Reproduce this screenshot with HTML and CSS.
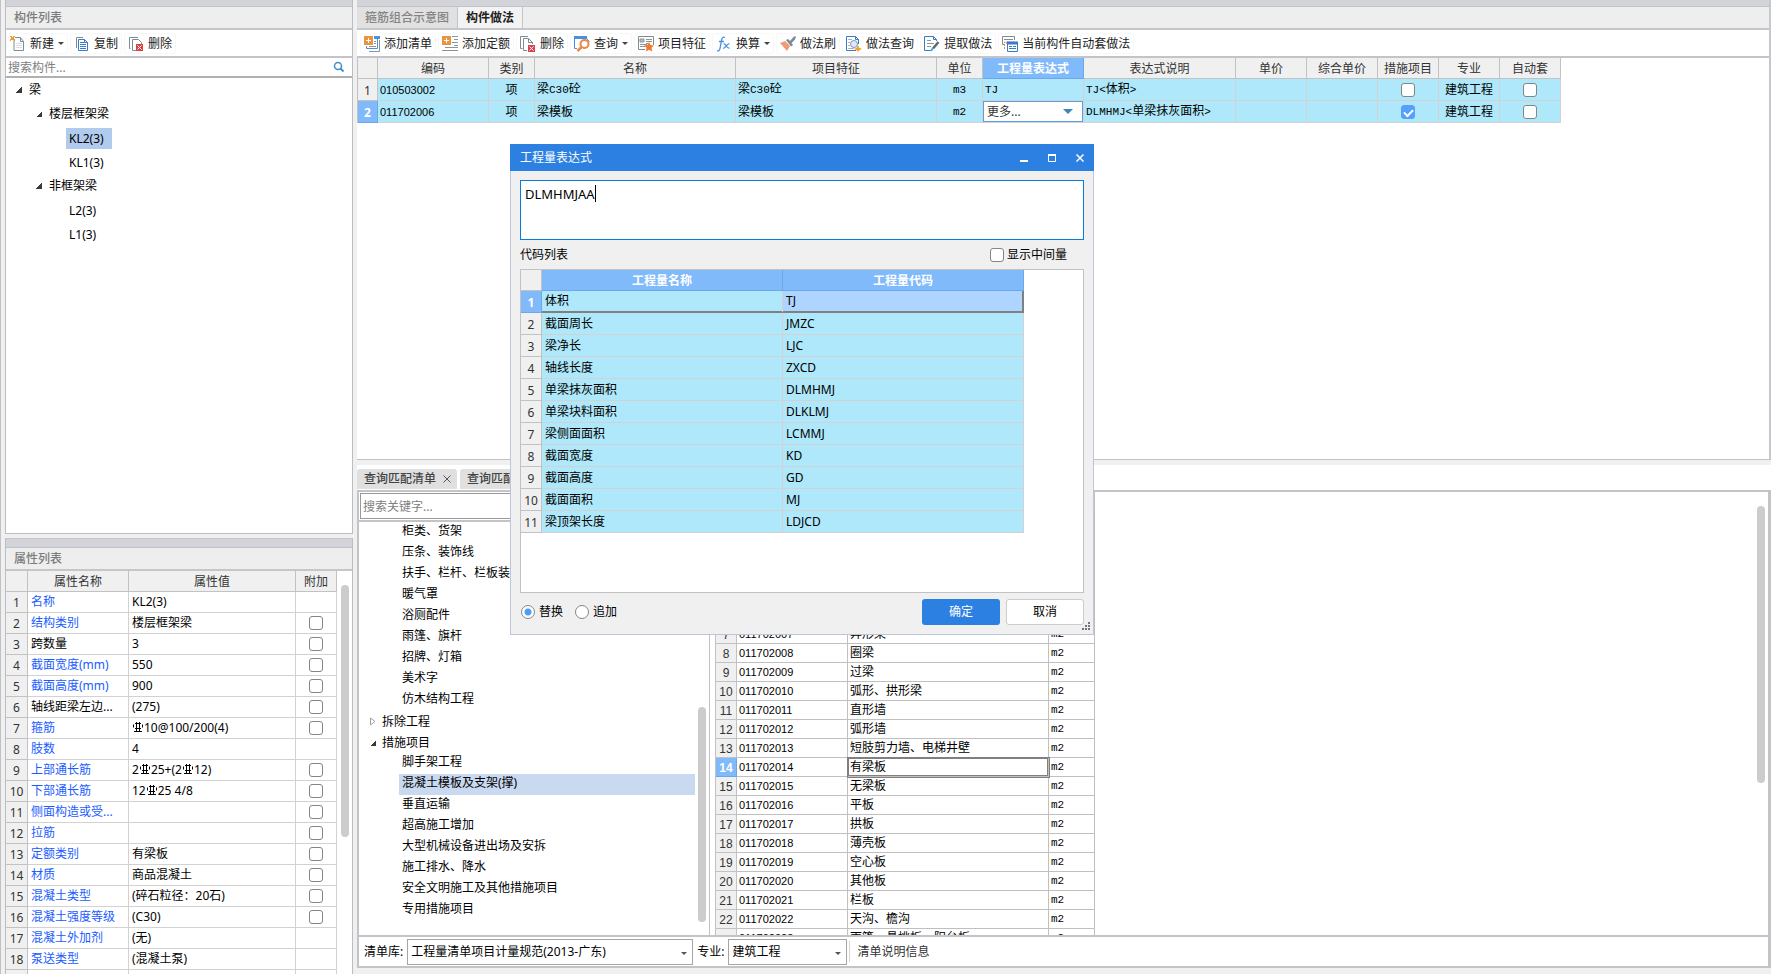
FILE: index.html
```html
<!DOCTYPE html>
<html lang="zh-CN">
<head>
<meta charset="utf-8">
<title>构件做法</title>
<link rel="stylesheet" href="styles.css">
</head>
<body>
<div class="app">
  <aside class="side">
    <section class="panel panel-tree">
      <div class="strip"></div>
      <h2 class="panel-title">构件列表</h2>
      <div class="toolbar">
        <button class="tool"><svg class="icon" viewBox="0 0 16 16"><path d="M4 3.5V14.500H13.500V5.500L10.500 1.500H5M10.500 1.500V5.500H13.500" fill="none" stroke="#7f8c94"/><path d="M6 7.500h6M6 9.500h6M6 11.500h6" stroke="#dcdde3"/><path d="M0 0h2v1H0zM3 0h2v1H3zM1 1h3v3H1zM0 3h1v2H0zM4 3h1v2H4z" fill="#f29a2e"/></svg>新建<i class="caret"></i></button>
        <button class="tool"><svg class="icon" viewBox="0 0 16 16"><path d="M2.500 12V1.500H9" fill="none" stroke="#7f8c94"/><path d="M4.500 3.500H10.500L13.500 6.500V14.500H4.500Z" fill="#fff" stroke="#3a7bc8"/><path d="M6 6.500h4M6 8.500h6M6 10.500h6M6 12.500h6M10.500 3.500v3h3" fill="none" stroke="#3a7bc8"/></svg>复制</button>
        <button class="tool"><svg class="icon" viewBox="0 0 16 16"><path d="M2.500 12.500H1.500V1.500H10" fill="none" stroke="#7f8c94"/><path d="M8 14.500H4.500V3.500H10.500L13.500 6.500V8" fill="none" stroke="#7f8c94"/><path d="M8 8h7v7H8z" fill="#d9413f"/><path d="M9.500 9.500l4 4M13.500 9.500l-4 4" stroke="#fff"/></svg>删除</button>
      </div>
      <div class="search"><input type="text" aria-label="搜索构件" placeholder="搜索构件..."><svg class="icon-s" viewBox="0 0 12 12"><circle cx="5" cy="5" r="3.500" fill="none" stroke="#3f8fc9" stroke-width="1.500"/><path d="M7.500 7.500L10.500 10.500" stroke="#3f8fc9" stroke-width="2"/></svg></div>
      <ul class="tree">
        <li><i class="open"></i>梁</li>
        <li class="lv2"><i class="open"></i>楼层框架梁</li>
        <li class="lv3"><span class="sel">KL2(3)</span></li>
        <li class="lv3"><span>KL1(3)</span></li>
        <li class="lv2"><i class="open"></i>非框架梁</li>
        <li class="lv3"><span>L2(3)</span></li>
        <li class="lv3"><span>L1(3)</span></li>
      </ul>
    </section>
    <section class="panel panel-props">
      <div class="strip"></div>
      <h2 class="panel-title">属性列表</h2>
      <div class="props-body">
        <table class="grid props">
          <colgroup><col class="w22"><col class="w101"><col class="w167"><col class="w41"></colgroup>
          <thead><tr><th></th><th>属性名称</th><th>属性值</th><th>附加</th></tr></thead>
          <tbody>
            <tr><th>1</th><td class="key">名称</td><td>KL2(3)</td><td></td></tr>
            <tr><th>2</th><td class="key">结构类别</td><td>楼层框架梁</td><td><input type="checkbox" aria-label="附加 结构类别"></td></tr>
            <tr><th>3</th><td>跨数量</td><td>3</td><td><input type="checkbox" aria-label="附加 跨数量"></td></tr>
            <tr><th>4</th><td class="key">截面宽度(mm)</td><td>550</td><td><input type="checkbox" aria-label="附加 截面宽度"></td></tr>
            <tr><th>5</th><td class="key">截面高度(mm)</td><td>900</td><td><input type="checkbox" aria-label="附加 截面高度"></td></tr>
            <tr><th>6</th><td>轴线距梁左边...</td><td>(275)</td><td><input type="checkbox" aria-label="附加 轴线距梁左边"></td></tr>
            <tr><th>7</th><td class="key">箍筋</td><td><svg class="rebar" viewBox="0 0 10 10"><path d="M3.500 0V9M6.500 0V9M1 9.500h8M2 1.500h6M2 6.500h6M.5 2.500v3M9.500 2.500v3" fill="none" stroke="#000"/></svg>10@100/200(4)</td><td><input type="checkbox" aria-label="附加 箍筋"></td></tr>
            <tr><th>8</th><td class="key">肢数</td><td>4</td><td></td></tr>
            <tr><th>9</th><td class="key">上部通长筋</td><td>2<svg class="rebar" viewBox="0 0 10 10"><path d="M3.500 0V9M6.500 0V9M1 9.500h8M2 1.500h6M2 6.500h6M.5 2.500v3M9.500 2.500v3" fill="none" stroke="#000"/></svg>25+(2<svg class="rebar" viewBox="0 0 10 10"><path d="M3.500 0V9M6.500 0V9M1 9.500h8M2 1.500h6M2 6.500h6M.5 2.500v3M9.500 2.500v3" fill="none" stroke="#000"/></svg>12)</td><td><input type="checkbox" aria-label="附加 上部通长筋"></td></tr>
            <tr><th>10</th><td class="key">下部通长筋</td><td>12<svg class="rebar" viewBox="0 0 10 10"><path d="M3.500 0V9M6.500 0V9M1 9.500h8M2 1.500h6M2 6.500h6M.5 2.500v3M9.500 2.500v3" fill="none" stroke="#000"/></svg>25 4/8</td><td><input type="checkbox" aria-label="附加 下部通长筋"></td></tr>
            <tr><th>11</th><td class="key">侧面构造或受...</td><td></td><td><input type="checkbox" aria-label="附加 侧面构造"></td></tr>
            <tr><th>12</th><td class="key">拉筋</td><td></td><td><input type="checkbox" aria-label="附加 拉筋"></td></tr>
            <tr><th>13</th><td class="key">定额类别</td><td>有梁板</td><td><input type="checkbox" aria-label="附加 定额类别"></td></tr>
            <tr><th>14</th><td class="key">材质</td><td>商品混凝土</td><td><input type="checkbox" aria-label="附加 材质"></td></tr>
            <tr><th>15</th><td class="key">混凝土类型</td><td>(碎石粒径：20石)</td><td><input type="checkbox" aria-label="附加 混凝土类型"></td></tr>
            <tr><th>16</th><td class="key">混凝土强度等级</td><td>(C30)</td><td><input type="checkbox" aria-label="附加 混凝土强度等级"></td></tr>
            <tr><th>17</th><td class="key">混凝土外加剂</td><td>(无)</td><td></td></tr>
            <tr><th>18</th><td class="key">泵送类型</td><td>(混凝土泵)</td><td></td></tr>
            <tr><th></th><td></td><td></td><td></td></tr>
          </tbody>
        </table>
        <div class="thumb thumb-props"></div>
      </div>
    </section>
  </aside>

  <main class="main">
    <section class="work">
      <div class="strip"></div>
      <nav class="tabs">
        <button class="tab">箍筋组合示意图</button>
        <button class="tab active">构件做法</button>
      </nav>
      <div class="toolbar">
        <button class="tool"><svg class="icon" viewBox="0 0 16 16"><path d="M0 0h9v9H0z" fill="#ea9440"/><path d="M4.500 2v5M2 4.500h5" stroke="#fff"/><path d="M10 0h6v3h-6z" fill="#4a90e2"/><path d="M13.500 3v9.500H2.500V10" fill="none" stroke="#4a90e2"/><path d="M15.500 4v11.500H5" fill="none" stroke="#8a949b"/><path d="M10 5.500h2M10 7.500h2M5 10.500h7" stroke="#8a949b"/></svg>添加清单</button>
        <button class="tool"><svg class="icon" viewBox="0 0 16 16"><path d="M0 0h9v9H0z" fill="#ea9440"/><path d="M4.500 2v5M2 4.500h5" stroke="#fff"/><path d="M10 .5h6M12 3.500h4M10 6.500h6M12 9.500h4M3 11.500h13M0 14.500h16" stroke="#8a949b"/></svg>添加定额</button>
        <button class="tool"><svg class="icon" viewBox="0 0 16 16"><path d="M2.500 12.500H.5V.5H8" fill="none" stroke="#7f8c94"/><path d="M7 14.500H3.500V2.500H8.500L12.500 6.500V8M8.500 2.500v4h4" fill="none" stroke="#7f8c94"/><path d="M8 9h7v7H8z" fill="#d9414f"/><path d="M9.500 10.500l4 4M13.500 10.500l-4 4" stroke="#fff"/></svg>删除</button>
        <button class="tool"><svg class="icon" viewBox="0 0 16 16"><path d="M0 0h13v3H0z" fill="#4a90e2"/><path d="M.5 2V12.500H3M13 3l2.500 2.500" fill="none" stroke="#4a90e2"/><circle cx="10.500" cy="8" r="4" fill="#fff" stroke="#ef8741" stroke-width="2"/><path d="M7.500 11L3.500 15" stroke="#ef8741" stroke-width="2.500"/></svg>查询<i class="caret"></i></button>
        <button class="tool"><svg class="icon" viewBox="0 0 16 16"><path d="M7 13.500H.5V.5H15.500V9" fill="none" stroke="#7f8c94"/><path d="M2 3h4v3H2zM8 3.500h6M8 5.500h6M2 8.500h7M2 10.500h5M8 7.500h2" stroke="#8a949b" fill="#b9c0c5"/><path d="M11 6l1.600 3 3.400.4-2.500 2.300.7 3.700L11 13.700 7.800 15.400l.7-3.700L6 9.400l3.400-.4z" fill="#ef7a2c"/></svg>项目特征</button>
        <button class="tool"><svg class="icon" viewBox="0 0 16 16"><path d="M9 1.500C7 .5 6 2 5.600 4L4 12.500C3.600 14.500 2.500 15.500 1 14.500M3 5.500h5" fill="none" stroke="#4a90e2" stroke-width="1.300"/><path d="M7.500 8.200C10 6.500 10 13 13.500 12M13.500 7.500C11 8 9.500 12 7 12.500" fill="none" stroke="#4a90e2" stroke-width="1.200"/></svg>换算<i class="caret"></i></button>
        <button class="tool"><svg class="icon" viewBox="0 0 16 16"><path d="M0 7l5-2 5 5-3 5z" fill="#f29a78"/><path d="M6 4l2-1 2 2 3-3.500 2-1.500 1 1-1 2.500L11.500 7 13 9l-2 1.500z" fill="#7b8a94"/></svg>做法刷</button>
        <button class="tool"><svg class="icon" viewBox="0 0 16 16"><path d="M10 14.500H.5V.5H9.500L12.500 3.500V8M9.500 .5v3h3" fill="none" stroke="#3a7bc8"/><path d="M2 3.500h4M2 6.500h2M2 9.500h2M2 12.500h6" stroke="#aab3ba"/><circle cx="8" cy="8" r="3.500" fill="#dfe9f7" stroke="#7a95c4"/><path d="M12 9l1.300 2.700L16 13l-2.700 1.300L12 16l-1.300-1.700L8 13l2.700-1.300z" fill="#f2a02e"/></svg>做法查询</button>
        <button class="tool"><svg class="icon" viewBox="0 0 16 16"><path d="M7 14.500H.5V.5H9.500L12.500 3.500V5M9.500 .5v3h3" fill="none" stroke="#3a7bc8"/><path d="M3 4.500h4M3 7.500h7M3 10.500h4" stroke="#8a949b"/><path d="M14.500 6L9 12.500" stroke="#5f6b73" stroke-width="2.500"/><path d="M9 12l-2 3" stroke="#3cb4d8" stroke-width="2"/></svg>提取做法</button>
        <button class="tool"><svg class="icon" viewBox="0 0 16 16"><path d="M3 8.500H.5V.5H12.500V4M2 3.500h9" fill="none" stroke="#7f8c94"/><path d="M2.500 13V6H12" fill="none" stroke="#ef8741" stroke-dasharray="2 1"/><path d="M5.500 6.500h10v9h-10z" fill="#fff" stroke="#3a7bc8"/><path d="M5 6h11v2H5zM7 10.500h3M11 10.500h3M7 12.500h7" fill="#3a7bc8" stroke="#3a7bc8"/></svg>当前构件自动套做法</button>
      </div>
      <table class="grid bill">
        <colgroup><col class="w20"><col class="w111"><col class="w46"><col class="w201"><col class="w201"><col class="w46"><col class="w101"><col class="w152"><col class="w71"><col class="w71"><col class="w61"><col class="w61"><col class="w61"></colgroup>
        <thead><tr><th></th><th>编码</th><th>类别</th><th>名称</th><th>项目特征</th><th>单位</th><th class="hot">工程量表达式</th><th>表达式说明</th><th>单价</th><th>综合单价</th><th>措施项目</th><th>专业</th><th>自动套</th></tr></thead>
        <tbody>
          <tr><th>1</th><td class="code">010503002</td><td class="mid">项</td><td>梁<span class="mono">C30</span>砼</td><td>梁<span class="mono">C30</span>砼</td><td class="mid mono">m3</td><td class="mono">TJ</td><td><span class="mono">TJ&lt;</span>体积<span class="mono">&gt;</span></td><td></td><td></td><td class="mid"><input type="checkbox" aria-label="措施项目 1"></td><td class="mid">建筑工程</td><td class="mid"><input type="checkbox" aria-label="自动套 1"></td></tr>
          <tr><th class="hot">2</th><td class="code">011702006</td><td class="mid">项</td><td>梁模板</td><td>梁模板</td><td class="mid mono">m2</td><td class="edit"><span class="select"><select aria-label="工程量表达式"><option>更多...</option></select></span></td><td><span class="mono">DLMHMJ&lt;</span>单梁抹灰面积<span class="mono">&gt;</span></td><td></td><td></td><td class="mid"><input type="checkbox" checked aria-label="措施项目 2"></td><td class="mid">建筑工程</td><td class="mid"><input type="checkbox" aria-label="自动套 2"></td></tr>
        </tbody>
      </table>
    </section>

    <section class="query">
      <nav class="qtabs">
        <button class="qtab">查询匹配清单<svg class="x" viewBox="0 0 8 8"><path d="M.5 .5l7 7M7.500 .5l-7 7" stroke="#555"/></svg></button>
        <button class="qtab">查询匹配定额<svg class="x" viewBox="0 0 8 8"><path d="M.5 .5l7 7M7.500 .5l-7 7" stroke="#555"/></svg></button>
      </nav>
      <div class="query-body">
        <div class="lib">
          <div class="lib-search"><input type="text" aria-label="搜索关键字" placeholder="搜索关键字..."></div>
          <div class="lib-scroll">
            <ul class="lib-tree">
              <li>柜类、货架</li>
              <li>压条、装饰线</li>
              <li>扶手、栏杆、栏板装饰</li>
              <li>暖气罩</li>
              <li>浴厕配件</li>
              <li>雨篷、旗杆</li>
              <li>招牌、灯箱</li>
              <li>美术字</li>
              <li>仿木结构工程</li>
              <li class="top"><svg class="closed" viewBox="0 0 6 9"><path d="M.5 1L5 4.500L.5 8Z" fill="none" stroke="#a0a0a0"/></svg>拆除工程</li>
              <li class="top"><i class="open"></i>措施项目</li>
              <li>脚手架工程</li>
              <li class="sel">混凝土模板及支架(撑)</li>
              <li>垂直运输</li>
              <li>超高施工增加</li>
              <li>大型机械设备进出场及安拆</li>
              <li>施工排水、降水</li>
              <li>安全文明施工及其他措施项目</li>
              <li>专用措施项目</li>
            </ul>
            <div class="thumb thumb-lib"></div>
          </div>
        </div>
        <div class="items">
          <table class="grid match">
            <colgroup><col class="w21"><col class="w111"><col class="w201"><col class="w46"></colgroup>
            <thead><tr><th></th><th>编码</th><th>名称</th><th>单位</th></tr></thead>
            <tbody>
              <tr><th>1</th><td class="code">011702001</td><td>基础</td><td class="mono">m2</td></tr>
              <tr><th>2</th><td class="code">011702002</td><td>矩形柱</td><td class="mono">m2</td></tr>
              <tr><th>3</th><td class="code">011702003</td><td>构造柱</td><td class="mono">m2</td></tr>
              <tr><th>4</th><td class="code">011702004</td><td>异形柱</td><td class="mono">m2</td></tr>
              <tr><th>5</th><td class="code">011702005</td><td>基础梁</td><td class="mono">m2</td></tr>
              <tr><th>6</th><td class="code">011702006</td><td>矩形梁</td><td class="mono">m2</td></tr>
              <tr><th>7</th><td class="code">011702007</td><td>异形梁</td><td class="mono">m2</td></tr>
              <tr><th>8</th><td class="code">011702008</td><td>圈梁</td><td class="mono">m2</td></tr>
              <tr><th>9</th><td class="code">011702009</td><td>过梁</td><td class="mono">m2</td></tr>
              <tr><th>10</th><td class="code">011702010</td><td>弧形、拱形梁</td><td class="mono">m2</td></tr>
              <tr><th>11</th><td class="code">011702011</td><td>直形墙</td><td class="mono">m2</td></tr>
              <tr><th>12</th><td class="code">011702012</td><td>弧形墙</td><td class="mono">m2</td></tr>
              <tr><th>13</th><td class="code">011702013</td><td>短肢剪力墙、电梯井壁</td><td class="mono">m2</td></tr>
              <tr><th class="hot">14</th><td class="code">011702014</td><td class="focus">有梁板</td><td class="mono">m2</td></tr>
              <tr><th>15</th><td class="code">011702015</td><td>无梁板</td><td class="mono">m2</td></tr>
              <tr><th>16</th><td class="code">011702016</td><td>平板</td><td class="mono">m2</td></tr>
              <tr><th>17</th><td class="code">011702017</td><td>拱板</td><td class="mono">m2</td></tr>
              <tr><th>18</th><td class="code">011702018</td><td>薄壳板</td><td class="mono">m2</td></tr>
              <tr><th>19</th><td class="code">011702019</td><td>空心板</td><td class="mono">m2</td></tr>
              <tr><th>20</th><td class="code">011702020</td><td>其他板</td><td class="mono">m2</td></tr>
              <tr><th>21</th><td class="code">011702021</td><td>栏板</td><td class="mono">m2</td></tr>
              <tr><th>22</th><td class="code">011702022</td><td>天沟、檐沟</td><td class="mono">m2</td></tr>
              <tr><th></th><td class="code">011702023</td><td>雨篷、悬挑板、阳台板</td><td class="mono">m2</td></tr>
            </tbody>
          </table>
          <div class="thumb thumb-items"></div>
        </div>
      </div>
      <footer class="foot">
        <label for="lib">清单库:</label>
        <span class="select lib-select"><select id="lib"><option>工程量清单项目计量规范(2013-广东)</option></select></span>
        <label for="major">专业:</label>
        <span class="select major-select"><select id="major"><option>建筑工程</option></select></span>
        <button class="info">清单说明信息</button>
      </footer>
    </section>
  </main>

  <div class="dialog" role="dialog" aria-labelledby="dlg-title">
    <header class="dlg-head">
      <h1 id="dlg-title">工程量表达式</h1>
      <button aria-label="最小化"><svg viewBox="0 0 8 8"><path d="M0 7h8" stroke="#fff" stroke-width="2"/></svg></button>
      <button aria-label="最大化"><svg viewBox="0 0 8 8"><path d="M.5 1v6.500h7V1M0 1h8" fill="none" stroke="#fff"/><path d="M0 1h8" stroke="#fff" stroke-width="2"/></svg></button>
      <button aria-label="关闭"><svg viewBox="0 0 8 8"><path d="M.5 .5l7 7M7.500 .5l-7 7" stroke="#fff" stroke-width="1.500"/></svg></button>
    </header>
    <div class="dlg-body">
      <div class="expr"><textarea aria-label="表达式" spellcheck="false">DLMHMJAA</textarea><i class="cursor"></i></div>
      <div class="dlg-row"><span>代码列表</span><label><input type="checkbox">显示中间量</label></div>
      <div class="codes">
        <table class="grid vars">
          <colgroup><col class="w21"><col class="w241"><col class="w241"></colgroup>
          <thead><tr><th></th><th class="hot">工程量名称</th><th class="hot">工程量代码</th></tr></thead>
          <tbody>
            <tr class="current"><th class="hot">1</th><td>体积</td><td>TJ</td></tr>
            <tr><th>2</th><td>截面周长</td><td>JMZC</td></tr>
            <tr><th>3</th><td>梁净长</td><td>LJC</td></tr>
            <tr><th>4</th><td>轴线长度</td><td>ZXCD</td></tr>
            <tr><th>5</th><td>单梁抹灰面积</td><td>DLMHMJ</td></tr>
            <tr><th>6</th><td>单梁块料面积</td><td>DLKLMJ</td></tr>
            <tr><th>7</th><td>梁侧面面积</td><td>LCMMJ</td></tr>
            <tr><th>8</th><td>截面宽度</td><td>KD</td></tr>
            <tr><th>9</th><td>截面高度</td><td>GD</td></tr>
            <tr><th>10</th><td>截面面积</td><td>MJ</td></tr>
            <tr><th>11</th><td>梁顶架长度</td><td>LDJCD</td></tr>
          </tbody>
        </table>
      </div>
      <div class="dlg-foot">
        <label><input type="radio" name="mode" checked>替换</label>
        <label><input type="radio" name="mode">追加</label>
        <button class="ok">确定</button>
        <button class="cancel">取消</button>
      </div>
    </div>
    <svg class="grip" viewBox="0 0 9 9"><path d="M6 0h2v2H6zM3 3h2v2H3zM6 3h2v2H6zM0 6h2v2H0zM3 6h2v2H3zM6 6h2v2H6z" fill="#72757a"/></svg>
  </div>
</div>
</body>
</html>
```
FILE: styles.css
```css
* { box-sizing: border-box; }
body, h1, h2, ul { margin: 0; padding: 0; }
body, button, input, select, textarea {
  font-family: "Noto Sans", "Noto Sans CJK SC", sans-serif;
  font-size: 12px;
  line-height: 18px;
  color: #000;
}
button { border: 0; background: none; padding: 0; }
ul { list-style: none; }
svg { display: block; flex: none; }

.app {
  position: relative;
  display: flex;
  gap: 4px;
  height: 100vh;
  overflow: hidden;
  background: #f0f0f0;
  border-left: 1px solid #c2c2c2;
}

/* Left column */
.side { flex: none; width: 352px; padding-left: 4px; display: flex; flex-direction: column; gap: 4px; }
.panel { display: flex; flex-direction: column; min-height: 0; border: 1px solid #bbbdc0; border-top: 0; background: #fff; }
.panel-tree { flex: 534 1 0; }
.panel-props { flex: 436 1 0; border-bottom: 0; border-top: 1px solid #c4c6cc; }
.strip { flex: none; height: 7px; background: #d3d4da; border-bottom: 1px solid #c0c3c9; }
.panel-props .strip { height: 9px; }
.panel-title {
  flex: none; height: 23px; padding: 1px 0 0 8px;
  background: #eee; border-bottom: 2px solid #c4c6ca;
  font-size: 12px; line-height: 20px; font-weight: 500; color: #7c7c7c;
}
.toolbar { flex: none; display: flex; align-items: center; gap: 2px; height: 28px; padding-top: 1px; background: #fff; border-bottom: 2px solid #c4c4c8; }
.tool { display: flex; align-items: center; gap: 4px; height: 21px; padding: 0 3px; border: 1px solid #f8f8f8; border-radius: 3px; color: #222; white-space: nowrap; }
.icon { width: 16px; height: 16px; }
.caret { width: 0; height: 0; border: 3px solid transparent; border-top-color: #444; border-bottom: 0; }
.search { flex: none; display: flex; align-items: center; height: 20px; padding-right: 7px; border-bottom: 2px solid #b0b0b0; }
.search input { flex: 1; min-width: 0; height: 18px; border: 0; padding: 1px 2px 0; background: none; outline: 0; }
.icon-s { width: 12px; height: 12px; }
::placeholder { color: #808080; opacity: 1; }

.tree li { display: flex; align-items: center; height: 24px; padding-left: 10px; }
.tree .lv2 { padding-left: 30px; }
.tree .lv3 { padding-left: 60px; }
.tree span { padding: 0 8px 0 3px; line-height: 21px; }
.tree .sel { background: #b0cbee; }
.open { flex: none; width: 6px; height: 6px; margin-right: 7px; background: linear-gradient(135deg, transparent 50%, #3a3a3a 50%); }

/* Shared tables */
.grid { border-spacing: 0; table-layout: fixed; width: 0; }
.grid th, .grid td {
  height: 22px; padding: 0 3px; overflow: hidden;
  border-right: 1px solid #d2d2d2; border-bottom: 1px solid #d2d2d2;
  line-height: 18px; text-align: left; white-space: nowrap;
}
.grid th { padding: 2px 0 0; background: #f0f0f0; border-color: #c2c2c2; color: #333; font-weight: 400; text-align: center; }
.grid th.hot { background: #80bafb; border-color: #6ba8ea; color: #fff; font-weight: 700; }
.grid .mid { text-align: center; padding: 0; }
.grid .mono { font-family: "Liberation Mono", monospace; font-size: 11px; }
.grid .code { font-family: "Liberation Sans", sans-serif; font-size: 11px; }
.w20 { width: 20px; } .w21 { width: 21px; } .w22 { width: 22px; } .w41 { width: 41px; } .w46 { width: 46px; }
.w61 { width: 61px; } .w71 { width: 71px; } .w101 { width: 101px; } .w111 { width: 111px; }
.w152 { width: 152px; } .w167 { width: 167px; } .w201 { width: 201px; } .w241 { width: 241px; }

input[type="checkbox"], input[type="radio"] {
  appearance: none; display: block; flex: none; width: 14px; height: 14px; margin: 0;
  border: 1px solid #858585; border-radius: 3px; background: #fff;
}
td input[type="checkbox"] { margin: 0 auto; }
input[type="checkbox"]:checked { border-color: #55a0fb; background: #55a0fb; }
input[type="checkbox"]:checked::after {
  content: ""; display: block; width: 7px; height: 4px; margin: 3px auto 0;
  border: solid #fff; border-width: 0 0 2px 2px; transform: rotate(-45deg);
}
input[type="radio"] { border-radius: 50%; }
input[type="radio"]:checked { background: radial-gradient(circle, #4d9cf5 3px, #fff 4px); }

/* Property table */
.props-body { display: flex; flex: 1; min-height: 0; overflow: hidden; }
.props th, .props td { height: 21px; }
.grid.props td { padding-top: 1px; }
.props .key { color: #1a5cff; }
.rebar { display: inline-block; width: 10px; height: 10px; margin: 0 1px; vertical-align: 0; }
.thumb { flex: none; width: 8px; border-radius: 4px; background: #ccc; }
.thumb-props { height: 252px; margin: 14px 0 0 4px; }

/* Work area */
.main { flex: 1; min-width: 0; display: flex; flex-direction: column; gap: 5px; }
.work { flex: 459 1 0; min-height: 0; overflow: hidden; background: #fff; border-bottom: 1px solid #c2c2c2; border-right: 2px solid #c4c8d0; }
.work .toolbar { padding-left: 3px; }
.tabs { display: flex; height: 23px; background: #eee; border-bottom: 2px solid #c4c6ca; }
.tab { padding: 1px 8px 0; border-right: 1px solid #c4c6ca; background: #e1e1e1; color: #858585; font-weight: 500; white-space: nowrap; }
.tab.active { background: #f3f3f3; color: #222; font-weight: 700; }
.bill thead th { height: 21px; }
.bill { border-left: 1px solid #c2c2c2; }
.bill td { padding: 0 2px; background: #aee8fa; }
.select { position: relative; display: block; background: #fff; }
.select select { appearance: none; display: block; width: 100%; height: 100%; padding: 1px 3px 0; border: 0; background: none; }
.select::after { content: ""; position: absolute; right: 5px; top: 50%; border: 3px solid transparent; border-top-color: #555; border-bottom: 0; pointer-events: none; }
.grid .edit { padding: 0; }
.edit .select { height: 21px; border: 1px solid #5a9fe8; }
.edit .select::after { right: 9px; top: 7px; border-width: 5px; border-top-color: #3c88b8; border-bottom: 0; }
.edit select { color: #333; }

/* Query area */
.query { flex: 503 1 0; min-height: 0; display: flex; flex-direction: column; background: #fff; border-bottom: 6px solid #f0f0f0; }
.qtabs { flex: none; display: flex; gap: 3px; height: 27px; padding-top: 4px; border-bottom: 2px solid #c2c4c8; }
.qtab { display: flex; align-items: center; gap: 7px; height: 20px; padding: 0 6px 0 7px; border-radius: 3px 3px 0 0; background: #e0e0e0; color: #444; font-weight: 500; white-space: nowrap; }
.x { width: 8px; height: 8px; }
.query-body { display: flex; flex: 1; min-height: 0; border: solid #c2c4c8; border-width: 0 3px 2px 2px; }
.lib { flex: none; width: 351px; display: flex; flex-direction: column; border-right: 1px solid #c2c2c2; }
.lib-search { flex: none; height: 30px; padding: 1px; border-bottom: 2px solid #c2c4c8; }
.lib-search input { display: block; width: 100%; height: 26px; padding: 0 2px; border: 1px solid #999; outline: 0; }
.lib-scroll { display: flex; flex: 1; min-height: 0; overflow: hidden; }
.lib-tree { flex: 1; }
.lib-tree li { height: 21px; margin: 0 3px 0 40px; padding-left: 3px; line-height: 18px; white-space: nowrap; }
.lib-tree .top { display: flex; align-items: center; margin-left: 11px; padding: 0; line-height: 16px; }
.lib-tree .sel { background: #c9d9f0; }
.closed { width: 6px; height: 9px; margin-right: 6px; }
.lib-tree .open { margin-right: 6px; }
.thumb-lib { height: 215px; margin: 185px 3px 0 0; }
.items { flex: 1; min-width: 0; display: flex; justify-content: space-between; overflow: hidden; margin-left: 5px; background: #fff; border-left: 1px solid #c2c2c2; }
.match th, .match td { height: 19px; line-height: 16px; }
.grid.match td { padding: 0 2px; border-color: #c0c0c0; }
.match .focus { box-shadow: inset 0 0 0 1px #808080; outline: 1px solid #808080; }
.match tbody th { font-family: "Liberation Sans", sans-serif; }
.thumb-items { height: 277px; margin: 14px 3px 0 0; }
.foot { flex: none; display: flex; align-items: center; height: 31px; padding-left: 5px; border: solid #c2c4c8; border-width: 0 3px 2px 2px; white-space: nowrap; }
.foot .select { height: 26px; border: 1px solid #a5a5a5; }
.lib-select { width: 286px; margin: 0 4px; }
.major-select { width: 119px; margin: 0 2px 0 4px; }
.info { height: 21px; padding-left: 7px; border-left: 1px solid #d5d5d5; color: #333; }

/* Dialog */
.dialog { position: absolute; left: 509px; top: 144px; width: 584px; background: #f0f0f0; border: 1px solid #bcc5da; border-top: 0; }
.dlg-head { display: flex; align-items: center; gap: 20px; height: 27px; margin: 0 -1px; padding: 0 10px; background: #2c80e2; }
.dlg-head h1 { flex: 1; font-size: 12px; font-weight: 400; color: #fff; }
.dlg-head svg { width: 8px; height: 8px; }
.dlg-body { padding: 9px; }
.expr { position: relative; }
.expr textarea { display: block; width: 100%; height: 60px; padding: 4px; border: 1px solid #0a7cd8; font-size: 13px; resize: none; outline: 0; }
.cursor { position: absolute; left: 75px; top: 5px; width: 1px; height: 17px; background: #000; }
.dlg-row { display: flex; align-items: center; justify-content: space-between; height: 29px; padding-right: 17px; }
.dlg-row label { display: flex; align-items: center; gap: 3px; }
.codes { height: 324px; background: #fff; border: 1px solid #c2c2c2; }
.vars thead th { height: 21px; }
.vars td { background: #aee8fa; }
.vars .current td { border-bottom: 2px solid #808080; }
.vars .current td:last-child { background: #add5ff; border-right: 2px solid #808080; }
.dlg-foot { display: flex; align-items: center; gap: 12px; height: 26px; margin-top: 6px; padding-left: 1px; }
.dlg-foot label { display: flex; align-items: center; gap: 4px; }
.dlg-foot button { width: 78px; height: 26px; border-radius: 3px; }
.dlg-foot .ok { margin-left: auto; background: #2c80e2; color: #fff; }
.dlg-foot .cancel { margin-left: -6px; background: #fff; border: 1px solid #ccc; }
.grip { position: absolute; right: 2px; bottom: 3px; width: 9px; height: 9px; }
```
